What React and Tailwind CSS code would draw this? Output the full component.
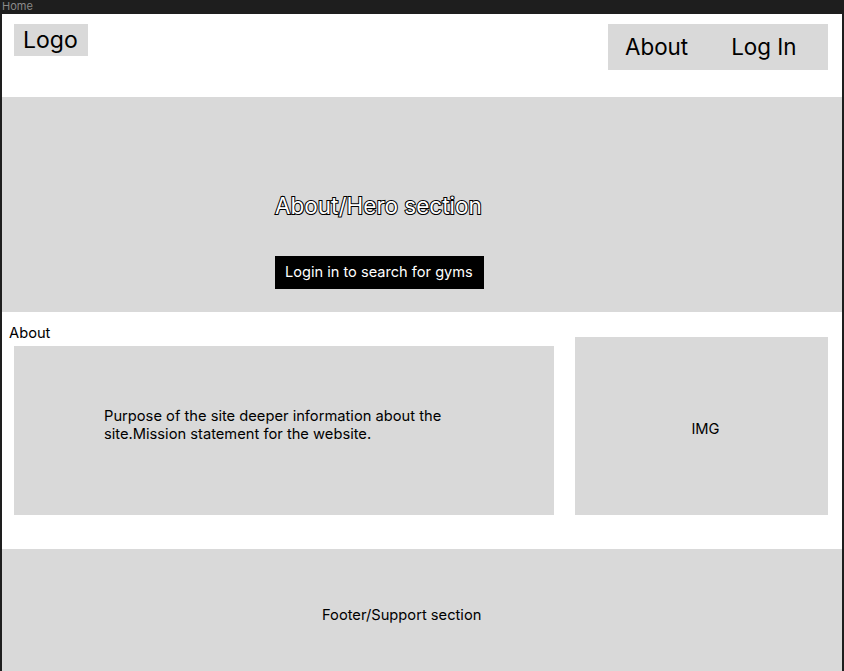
export default function App() {
  return (
    <div className="w-[844px] h-[671px] overflow-hidden bg-[#1e1e1e] font-['Inter',sans-serif] text-black">
      {/* Frame label */}
      <div className="h-[14px] pl-[2px] text-[11px] leading-[12px] text-[#8a8a8a]">Home</div>

      {/* Frame */}
      <div className="mx-[2px] h-[657px] bg-white overflow-hidden">
        {/* Header */}
        <header className="h-[83px] flex justify-between items-start pt-[10px] pl-[12px] pr-[14px]">
          <div className="w-[74px] h-[32px] bg-[#d9d9d9] pl-[9px] text-[23px] leading-[33px]">Logo</div>
          <nav className="w-[220px] h-[46px] bg-[#d9d9d9] flex items-center pl-[17px] text-[22.4px] gap-[43px]">
            <a>About</a>
            <a>Log In</a>
          </nav>
        </header>

        {/* Hero */}
        <section className="h-[215px] bg-[#d9d9d9] pt-[95px] pl-[273px]">
          <h1 className="text-[22.5px] leading-[28px] text-white [-webkit-text-stroke:2px_black] [paint-order:stroke_fill]">
            About/Hero section
          </h1>
          <button className="mt-[36px] h-[33px] w-[209px] px-[10px] text-left bg-black text-white text-[14.6px] leading-[33px]">
            Login in to search for gyms
          </button>
        </section>

        {/* About */}
        <section className="pt-[12px]">
          <p className="pl-[7px] text-[14.7px] leading-[18px]">About</p>
          <div className="flex items-end pl-[12px] gap-[21px] -mt-[5px]">
            <div className="w-[540px] h-[169px] bg-[#d9d9d9] pt-[61px] pl-[90px]">
              <p className="w-[345px] text-[14.7px] leading-[18px]">
                Purpose of the site deeper information about the site.Mission statement for the website.
              </p>
            </div>
            <div className="w-[253px] h-[178px] bg-[#d9d9d9] flex items-center justify-center pt-[7px] pl-[8px] text-[14.7px]">
              IMG
            </div>
          </div>
        </section>

        {/* Footer */}
        <footer className="mt-[34px] h-[140px] bg-[#d9d9d9] pt-[57px] pl-[320px] text-[14.7px] leading-[18px]">
          Footer/Support section
        </footer>
      </div>
    </div>
  );
}
